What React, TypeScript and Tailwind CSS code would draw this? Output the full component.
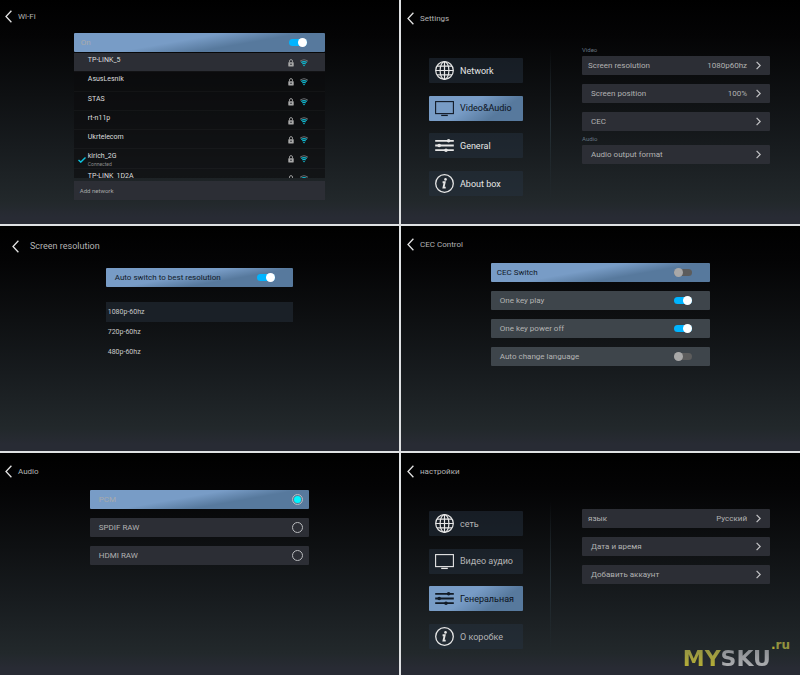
import type { ReactNode } from "react";
import { clsx } from "clsx";

const FOCUS_WIDE = "bg-[linear-gradient(170deg,#789cc6_42%,#57799d_64%)]";
const FOCUS_MENU = "bg-[linear-gradient(145deg,#789cc6_42%,#57799d_72%)]";

const NETWORKS = [
  { ssid: "TP-LINK_5", focused: true },
  { ssid: "AsusLesnik" },
  { ssid: "STAS" },
  { ssid: "rt-n11p" },
  { ssid: "Ukrtelecom" },
  { ssid: "kirich_2G", connected: true },
  { ssid: "TP-LINK_1D2A" },
];

const RESOLUTIONS = ["1080p-60hz", "720p-60hz", "480p-60hz"];

const CEC_OPTIONS = [
  { label: "CEC Switch", on: false, focused: true },
  { label: "One key play", on: true },
  { label: "One key power off", on: true },
  { label: "Auto change language", on: false },
];

const AUDIO_FORMATS = ["PCM", "SPDIF RAW", "HDMI RAW"];

function ChevronLeft() {
  return (
    <svg viewBox="0 0 7 13" className="h-[13px] w-[7px]" fill="none" stroke="currentColor" strokeWidth="1.3">
      <path d="M6.4 0.7 1 6.5l5.4 5.8" />
    </svg>
  );
}

function ChevronRight() {
  return (
    <svg viewBox="0 0 5 9" className="h-[9px] w-[5px] shrink-0 text-[#c4c4c6]" fill="none" stroke="currentColor" strokeWidth="1.2">
      <path d="M0.6 0.8 4.2 4.5 0.6 8.2" />
    </svg>
  );
}

function GlobeIcon() {
  return (
    <svg viewBox="0 0 19 19" className="size-[19px]" fill="none" stroke="currentColor" strokeWidth="1.2">
      <circle cx="9.5" cy="9.5" r="8.8" />
      <ellipse cx="9.5" cy="9.5" rx="4.4" ry="8.8" />
      <path d="M9.5 0.7v17.6M0.7 9.5h17.6M2 5.2h15M2 13.8h15" />
    </svg>
  );
}

function TvIcon() {
  return (
    <svg viewBox="0 0 19 19" className="size-[19px]" fill="none" stroke="currentColor" strokeWidth="1.1">
      <rect x="0.6" y="2.6" width="17.8" height="12" />
      <path d="M6.2 16.4h6.6" strokeWidth="1.3" />
    </svg>
  );
}

function SlidersIcon() {
  return (
    <svg viewBox="0 0 19 19" className="size-[19px]" fill="none" stroke="currentColor" strokeWidth="1.8">
      <path d="M0.2 4.8h18.6M0.2 9.5h18.6M0.2 14.2h18.6" />
      <g fill="currentColor" stroke="none">
        <circle cx="13.6" cy="4.8" r="1.8" />
        <circle cx="4.2" cy="9.5" r="1.8" />
        <circle cx="11" cy="14.2" r="1.8" />
      </g>
    </svg>
  );
}

function InfoIcon() {
  return (
    <svg viewBox="0 0 19 19" className="size-[19px]" fill="none" stroke="currentColor" strokeWidth="1.3">
      <circle cx="9.5" cy="9.5" r="8.8" />
      <circle cx="10.5" cy="5.4" r="1.3" fill="currentColor" stroke="none" />
      <path d="M7.6 8.3h2.1L8.5 13.6h2.2" strokeWidth="1.9" />
    </svg>
  );
}

function LockIcon() {
  return (
    <svg viewBox="0 0 6 8" className="h-2 w-1.5 text-[#a9a9a9]">
      <path d="M1.5 3.4V2.1a1.5 1.5 0 0 1 3 0v1.3" fill="none" stroke="currentColor" strokeWidth="0.9" />
      <rect x="0.3" y="3.2" width="5.4" height="4.2" rx="0.4" fill="currentColor" />
      <circle cx="3" cy="5.3" r="0.8" fill="#26282d" />
    </svg>
  );
}

function WifiIcon() {
  return (
    <svg viewBox="0 0 8 8" className="size-2" fill="none">
      <path d="M0.3 2.3C2.4 0.6 5.6 0.6 7.7 2.3" stroke="#6f7478" strokeWidth="1.1" />
      <path d="M1.2 3.6C2.9 2.3 5.1 2.3 6.8 3.6" stroke="#12b8cf" strokeWidth="1.2" />
      <path d="M2.3 5c1-0.8 2.4-0.8 3.4 0" stroke="#12b8cf" strokeWidth="1.1" />
      <path d="M2.9 5.9h2.2L4 7.4z" fill="#12b8cf" />
    </svg>
  );
}

function CheckIcon() {
  return (
    <svg viewBox="0 0 8 6" className="h-1.5 w-2" fill="none" stroke="#0cc3df" strokeWidth="1.4">
      <path d="M0.5 2.9 2.8 5.1 7.5 0.6" />
    </svg>
  );
}

type ScreenProps = {
  title: string;
  headerClass: string;
  children: ReactNode;
};

function Screen({ title, headerClass, children }: ScreenProps) {
  return (
    <section className="relative flex min-w-0 flex-col bg-[linear-gradient(180deg,#000000_0%,#040405_16%,#0e1012_42%,#171b1e_65%,#22282b_90%,#282b34_97%)]">
      <header className={clsx("flex items-center text-[#b4b4b4]", headerClass)}>
        <button type="button" aria-label="Back" className="text-[#e2e2e2]">
          <ChevronLeft />
        </button>
        <h1 className="pt-px">{title}</h1>
      </header>
      {children}
    </section>
  );
}

function Switch({ id, on }: { id: string; on: boolean }) {
  return (
    <input
      id={id}
      type="checkbox"
      role="switch"
      defaultChecked={on}
      className="flex h-[7px] w-[18px] shrink-0 appearance-none items-center rounded-full bg-[#5c5c5c] before:size-[9px] before:shrink-0 before:rounded-full before:bg-[#a8a8a8] checked:justify-end checked:bg-[#00b4ff] checked:before:bg-white"
    />
  );
}

type SwitchRowProps = {
  id: string;
  label: string;
  on: boolean;
  className: string;
};

function SwitchRow({ id, label, on, className }: SwitchRowProps) {
  return (
    <div className={clsx("flex h-[19px] items-center justify-between rounded-[1px] pr-[18px]", className)}>
      <label htmlFor={id} className="pt-px">
        {label}
      </label>
      <Switch id={id} on={on} />
    </div>
  );
}

type MenuEntry = { label: string; icon: ReactNode; active?: boolean };

function SideMenu({ items, idleText }: { items: MenuEntry[]; idleText: string }) {
  return (
    <nav className="mt-[22px] flex h-[138px] w-[94px] shrink-0 flex-col justify-between">
      {items.map((item) => (
        <button
          key={item.label}
          type="button"
          className={clsx(
            "flex h-[25px] items-center gap-1.5 rounded-[1px] pl-1.5 text-left text-[9px] whitespace-nowrap",
            item.active ? FOCUS_MENU : "bg-[#253240]/50",
          )}
        >
          <span className={item.active ? "text-[#111a26]" : "text-[#e6e6e6]"}>{item.icon}</span>
          <span className={clsx("pt-0.5", item.active ? "text-[#0b1220]" : idleText)}>{item.label}</span>
        </button>
      ))}
    </nav>
  );
}

type LinkEntry = { label: string; value?: string; first?: boolean };

function LinkRows({ rows }: { rows: LinkEntry[] }) {
  return (
    <ul className="flex flex-col gap-[9px]">
      {rows.map((row) => (
        <li key={row.label}>
          <button
            type="button"
            className={clsx(
              "flex h-[19px] w-full items-center rounded-[1px] bg-[#2c2e35] pr-[9px] text-[8px] text-[#b2b2b2]",
              row.first ? "pl-1.5" : "pl-[9px]",
            )}
          >
            <span className="flex-1 pt-px text-left">{row.label}</span>
            <span className="pt-px pr-[9px]">{row.value}</span>
            <ChevronRight />
          </button>
        </li>
      ))}
    </ul>
  );
}

type SettingsBodyProps = {
  menu: MenuEntry[];
  idleText: string;
  children: ReactNode;
};

function SettingsBody({ menu, idleText, children }: SettingsBodyProps) {
  return (
    <div className="flex pr-[30px] pl-7">
      <SideMenu items={menu} idleText={idleText} />
      <div className="mt-3 ml-[27px] h-[154px] w-px shrink-0 bg-linear-to-b from-transparent via-[#253036] to-transparent" />
      <div className="ml-[31px] min-w-0 flex-1">{children}</div>
    </div>
  );
}

function GroupTitle({ children }: { children: ReactNode }) {
  return <h2 className="h-3 text-[6px] leading-3 text-[#677683]">{children}</h2>;
}

function WifiScreen() {
  return (
    <Screen title="Wi-Fi" headerClass="h-[33px] gap-1.5 pl-[5px] text-[8px]">
      <div className="mx-auto w-[63%]">
        <SwitchRow id="wifi" label="On" on className={clsx("pl-[7px] text-[8px] text-[#a9abac]", FOCUS_WIDE)} />
        <div className="mt-px h-[125px] overflow-hidden bg-[#0b0c0d]/60">
          <ul className="flex h-[135px] flex-col">
            {NETWORKS.map((network) => (
              <li key={network.ssid} className="flex-1 border-b border-white/3">
                <button
                  type="button"
                  className={clsx("flex h-full w-full items-start pr-[17px]", network.focused && "bg-[#2c2e35]")}
                >
                  <span className="flex w-[14px] justify-end pt-2 pr-0.5">
                    {network.connected && <CheckIcon />}
                  </span>
                  <span className="flex flex-1 flex-col pt-0.5 text-left">
                    <span className="text-[7px] leading-[11px] text-[#dedede]">{network.ssid}</span>
                    {network.connected && (
                      <span className="text-[5px] leading-[5px] text-[#8a8a8a]">Connected</span>
                    )}
                  </span>
                  <span className="flex gap-1.5 pt-1.5">
                    <LockIcon />
                    <WifiIcon />
                  </span>
                </button>
              </li>
            ))}
          </ul>
        </div>
        <button
          type="button"
          className="mt-[3px] block h-[19px] w-full bg-[#2c2e35] pl-1.5 text-left text-[6px] text-[#a8a8a8]"
        >
          Add network
        </button>
      </div>
    </Screen>
  );
}

function SettingsScreen() {
  const menu = [
    { label: "Network", icon: <GlobeIcon /> },
    { label: "Video&Audio", icon: <TvIcon />, active: true },
    { label: "General", icon: <SlidersIcon /> },
    { label: "About box", icon: <InfoIcon /> },
  ];

  return (
    <Screen title="Settings" headerClass="h-9 gap-1.5 pl-1.5 text-[8px]">
      <SettingsBody menu={menu} idleText="text-[#e6e6e6]">
        <div className="flex flex-col gap-0.5 pt-2">
          <section>
            <GroupTitle>Video</GroupTitle>
            <LinkRows
              rows={[
                { label: "Screen resolution", value: "1080p60hz", first: true },
                { label: "Screen position", value: "100%" },
                { label: "CEC" },
              ]}
            />
          </section>
          <section>
            <GroupTitle>Audio</GroupTitle>
            <LinkRows rows={[{ label: "Audio output format" }]} />
          </section>
        </div>
      </SettingsBody>
    </Screen>
  );
}

function ResolutionScreen() {
  return (
    <Screen title="Screen resolution" headerClass="h-10 gap-[11px] pl-3 text-[9px]">
      <div className="mx-auto mt-0.5 w-[47%]">
        <SwitchRow
          id="best-resolution"
          label="Auto switch to best resolution"
          on
          className={clsx("pl-[9px] text-[8px] text-[#111a28]", FOCUS_WIDE)}
        />
        <ul className="mt-[15px]">
          {RESOLUTIONS.map((resolution, i) => (
            <li key={resolution}>
              <button
                type="button"
                className={clsx(
                  "block h-5 w-full pt-px pl-0.5 text-left text-[7px] text-[#c9c9c9]",
                  i === 0 && "bg-[#1a2027]",
                )}
              >
                {resolution}
              </button>
            </li>
          ))}
        </ul>
      </div>
    </Screen>
  );
}

function CecScreen() {
  return (
    <Screen title="CEC Control" headerClass="h-[37px] gap-1.5 pl-1.5 text-[8px]">
      <div className="mx-auto flex w-[55%] flex-col gap-[9px]">
        {CEC_OPTIONS.map((option, i) => (
          <SwitchRow
            key={option.label}
            id={`cec-${i}`}
            label={option.label}
            on={option.on}
            className={clsx(
              "text-[8px]",
              option.focused ? "pl-1.5 text-[#111a28]" : "bg-[#3e454b] pl-[9px] text-[#b4b4b4]",
              option.focused && FOCUS_WIDE,
            )}
          />
        ))}
      </div>
    </Screen>
  );
}

function AudioScreen() {
  return (
    <Screen title="Audio" headerClass="h-[37px] gap-1.5 pl-[5px] text-[8px]">
      <div className="mx-auto flex w-[55%] flex-col gap-[9px]">
        {AUDIO_FORMATS.map((format, i) => (
          <label
            key={format}
            className={clsx(
              "flex h-[19px] items-center justify-between rounded-[1px] pr-1.5 pl-[9px] text-[8px]",
              i === 0 ? "text-[#a9abac]" : "bg-[#2c2e35] text-[#b2b2b2]",
              i === 0 && FOCUS_WIDE,
            )}
          >
            <span className="pt-px">{format}</span>
            <input
              type="radio"
              name="audio-format"
              defaultChecked={i === 0}
              className="grid size-[11px] appearance-none place-items-center rounded-full border border-[#b9bbbe] checked:before:size-[7px] checked:before:rounded-full checked:before:bg-[#00f6ff]"
            />
          </label>
        ))}
      </div>
    </Screen>
  );
}

function Watermark() {
  return (
    <div className="absolute right-2.5 bottom-1 flex items-start font-['DejaVu_Sans'] font-bold">
      <span className="mt-2 text-[22px] leading-6">
        <span className="bg-linear-to-b from-[#8f8f45] to-[#bdb430] bg-clip-text text-transparent">MY</span>
        <span className="bg-linear-to-b from-[#85888c] to-[#b5b6b9] bg-clip-text text-transparent">SKU</span>
      </span>
      <span className="text-xs leading-3">
        <span className="text-[#b5ad35]">.</span>
        <span className="text-[#93923f]">ru</span>
      </span>
    </div>
  );
}

function RussianSettingsScreen() {
  const menu = [
    { label: "сеть", icon: <GlobeIcon /> },
    { label: "Видео аудио", icon: <TvIcon /> },
    { label: "Генеральная", icon: <SlidersIcon />, active: true },
    { label: "О коробке", icon: <InfoIcon /> },
  ];

  return (
    <Screen title="настройки" headerClass="h-9 gap-1.5 pl-1.5 text-[8px]">
      <SettingsBody menu={menu} idleText="text-[#b4b4b4]">
        <div className="pt-5">
          <LinkRows
            rows={[
              { label: "язык", value: "Русский", first: true },
              { label: "Дата и время" },
              { label: "Добавить аккаунт" },
            ]}
          />
        </div>
      </SettingsBody>
      <Watermark />
    </Screen>
  );
}

export default function App() {
  return (
    <main className="grid min-h-screen grid-cols-2 grid-rows-[224fr_225fr_222fr] gap-0.5 bg-[#dfe1e3] font-[Roboto,sans-serif]">
      <WifiScreen />
      <SettingsScreen />
      <ResolutionScreen />
      <CecScreen />
      <AudioScreen />
      <RussianSettingsScreen />
    </main>
  );
}
